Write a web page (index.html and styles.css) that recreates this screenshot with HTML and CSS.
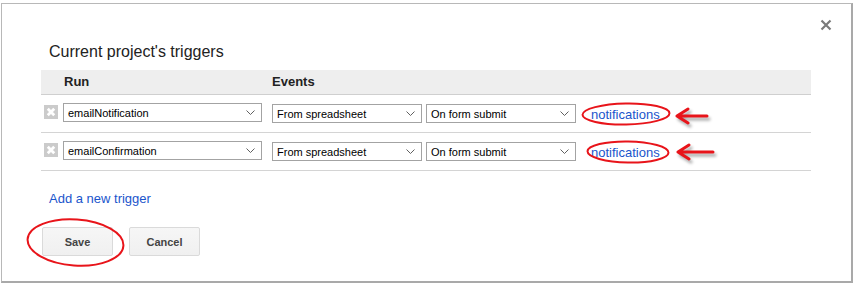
FILE: index.html
```html
<!DOCTYPE html>
<html lang="en">
<head>
    <meta charset="UTF-8">
    <meta name="viewport" content="width=device-width, initial-scale=1.0">
    <title>Current project's triggers</title>
    <link rel="stylesheet" href="styles.css">
</head>
<body>
    <div class="dialog">
        <div class="dialog-top">
            <svg class="close" width="12" height="12" viewBox="0 0 12 12"><path d="M1.5 1.5 L10.5 10.5 M10.5 1.5 L1.5 10.5" /></svg>
        </div>

        <h2 class="title">Current project's triggers</h2>

        <div class="grid head">
            <div class="col-run">Run</div>
            <div class="col-events">Events</div>
        </div>

        <!-- trigger rows -->
        <div class="grid row">
            <div class="run-cell">
                <span class="remove"><svg width="13" height="13" viewBox="0 0 13 13"><path d="M3.5 3.5 L9.5 9.5 M9.5 3.5 L3.5 9.5" /></svg></span>
                <div class="select wide"><span>emailNotification</span><svg class="chev" width="9" height="5" viewBox="0 0 9 5"><path d="M0.5 0.5 L4.5 4.5 L8.5 0.5" /></svg></div>
            </div>
            <div class="events-cell">
                <div class="select"><span>From spreadsheet</span><svg class="chev" width="9" height="5" viewBox="0 0 9 5"><path d="M0.5 0.5 L4.5 4.5 L8.5 0.5" /></svg></div>
                <div class="select"><span>On form submit</span><svg class="chev" width="9" height="5" viewBox="0 0 9 5"><path d="M0.5 0.5 L4.5 4.5 L8.5 0.5" /></svg></div>
                <span class="note">
                    <a href="#" class="link">notifications</a>
                    <svg class="ring ring-a" width="90" height="24" viewBox="0 0 90 24"><ellipse cx="45" cy="12" rx="43.5" ry="10.5" transform="rotate(-1 45 12)" /></svg>
                    <svg class="arrow arrow-a" width="40" height="22" viewBox="0 0 40 22"><path d="M32 11 L2 11 M13 4 L2 11 L13 18" /></svg>
                </span>
            </div>
        </div>

        <div class="grid row">
            <div class="run-cell">
                <span class="remove"><svg width="13" height="13" viewBox="0 0 13 13"><path d="M3.5 3.5 L9.5 9.5 M9.5 3.5 L3.5 9.5" /></svg></span>
                <div class="select wide"><span>emailConfirmation</span><svg class="chev" width="9" height="5" viewBox="0 0 9 5"><path d="M0.5 0.5 L4.5 4.5 L8.5 0.5" /></svg></div>
            </div>
            <div class="events-cell">
                <div class="select"><span>From spreadsheet</span><svg class="chev" width="9" height="5" viewBox="0 0 9 5"><path d="M0.5 0.5 L4.5 4.5 L8.5 0.5" /></svg></div>
                <div class="select"><span>On form submit</span><svg class="chev" width="9" height="5" viewBox="0 0 9 5"><path d="M0.5 0.5 L4.5 4.5 L8.5 0.5" /></svg></div>
                <span class="note">
                    <a href="#" class="link">notifications</a>
                    <svg class="ring ring-b" width="84" height="24" viewBox="0 0 84 24"><ellipse cx="42" cy="12" rx="40.5" ry="10.5" transform="rotate(1 42 12)" /></svg>
                    <svg class="arrow arrow-b" width="42" height="22" viewBox="0 0 42 22"><path d="M37 11 L2 11 M13 4 L2 11 L13 18" /></svg>
                </span>
            </div>
        </div>

        <a href="#" class="link add">Add a new trigger</a>

        <div class="buttons">
            <span class="note">
                <button class="btn">Save</button>
                <svg class="ring ring-save" width="99" height="49" viewBox="0 0 99 49"><ellipse cx="49.5" cy="24.5" rx="48" ry="23" transform="rotate(4 49.5 24.5)" /></svg>
            </span>
            <button class="btn">Cancel</button>
        </div>
    </div>
</body>
</html>
```

FILE: styles.css
```css
body {
    margin: 0;
    background-color: #fff;
    font-family: "Liberation Sans", Arial, sans-serif;
    color: #222;
}
.dialog {
    box-sizing: border-box;
    width: 852px;
    height: 280px;
    margin: 3px 0 0 1px;
    padding: 15px 40px 0 39px;
    border: 1px solid #b8b8b8;
    border-right: 2px solid #a9a9a9;
    border-bottom: 2px solid #a9a9a9;
}
.dialog-top {
    display: flex;
    justify-content: flex-end;
    margin-right: -21px;
}
.close {
    display: block;
    fill: none;
    stroke: #7a7a7a;
    stroke-width: 2.2;
}
.title {
    margin: 11px 0 0 8px;
    font-size: 16px;
    line-height: 20px;
    font-weight: normal;
    color: #222;
}
.grid {
    display: grid;
    grid-template-columns: 231px 1fr;
}
.head {
    margin-top: 8px;
    height: 24px;
    line-height: 24px;
    background-color: #eee;
    border-bottom: 1px solid #cfcfcf;
    font-size: 13px;
    font-weight: bold;
}
.col-run {
    padding-left: 23px;
}
.row {
    box-sizing: border-box;
    height: 38px;
    padding-top: 9px;
    border-bottom: 1px solid #d4d4d4;
    align-items: start;
}
.run-cell {
    display: flex;
    align-items: flex-start;
    padding-left: 3px;
    margin-top: -1px;
}
.remove {
    display: block;
    flex: none;
    width: 14px;
    height: 14px;
    margin: 2px 5px 0 0;
    background-color: #cbcbcb;
}
.remove svg {
    display: block;
    width: 14px;
    height: 14px;
    fill: none;
    stroke: #fff;
    stroke-width: 2.6;
}
.events-cell {
    display: flex;
    align-items: flex-start;
    gap: 4px;
}
.select {
    box-sizing: border-box;
    display: flex;
    align-items: center;
    justify-content: space-between;
    width: 150px;
    height: 19px;
    padding: 0 6px 0 4px;
    border: 1px solid #a3a3a3;
    background-color: #fff;
    font-size: 11px;
    color: #000;
}
.select.wide {
    width: 199px;
}
.chev {
    fill: none;
    stroke: #606060;
    stroke-width: 1;
}
.link {
    color: #1a55cc;
    text-decoration: none;
    font-size: 13px;
    line-height: 15px;
}
.note {
    position: relative;
    display: block;
}
.events-cell .note {
    margin: 1px 0 0 11px;
}
.ring {
    position: absolute;
    fill: none;
    stroke: #e8141a;
    stroke-width: 2;
    pointer-events: none;
}
.ring-a {
    left: -10px;
    top: -3px;
}
.ring-b {
    left: -5px;
    top: -3px;
}
.ring-save {
    left: -16px;
    top: -9px;
}
.arrow {
    position: absolute;
    fill: none;
    stroke: #e8141a;
    stroke-width: 3;
    stroke-linecap: round;
    stroke-linejoin: round;
    filter: drop-shadow(2px 3px 1.5px rgba(0, 0, 0, 0.35));
}
.arrow-a {
    left: 84px;
    top: 0;
}
.arrow-b {
    left: 85px;
    top: -2px;
}
.add {
    display: block;
    margin: 20px 0 0 8px;
    line-height: 16px;
}
.buttons {
    display: flex;
    gap: 16px;
    margin-top: 20px;
    padding-left: 1px;
}
.btn {
    display: block;
    width: 71px;
    height: 29px;
    padding: 0;
    border: 1px solid #dadada;
    border-radius: 2px;
    background: linear-gradient(#f6f6f6, #f0f0f0);
    font-family: "Liberation Sans", Arial, sans-serif;
    font-size: 11px;
    font-weight: bold;
    color: #444;
}
```
